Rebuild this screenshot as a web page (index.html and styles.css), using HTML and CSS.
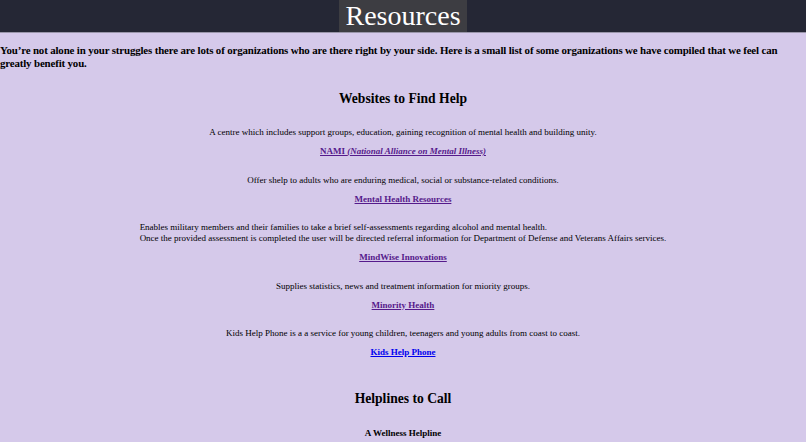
FILE: index.html
```html
<!DOCTYPE html>
<html lang="en">
<head>
<meta charset="utf-8">
<title>Resources</title>
<link rel="stylesheet" href="styles.css">
</head>
<body>
<header class="topbar">
  <h1 class="title">Resources</h1>
</header>
<p class="intro">You’re not alone in your struggles there are lots of organizations who are there right by your side. Here is a small list of some organizations we have compiled that we feel can greatly benefit you.</p>

<section class="section">
  <h2 class="section-title">Websites to Find Help</h2>
  <div class="items">
    <div class="item">
      <p class="desc">A centre which includes support groups, education, gaining recognition of mental health and building unity.</p>
      <a class="link visited" href="#">NAMI <em>(National Alliance on Mental Illness)</em></a>
    </div>
    <div class="item">
      <p class="desc">Offer shelp to adults who are enduring medical, social or substance-related conditions.</p>
      <a class="link visited" href="#">Mental Health Resources</a>
    </div>
    <div class="item">
      <p class="desc desc-block">Enables military members and their families to take a brief self-assessments regarding alcohol and mental health.<br>Once the provided assessment is completed the user will be directed referral information for Department of Defense and Veterans Affairs services.</p>
      <a class="link visited" href="#">MindWise Innovations</a>
    </div>
    <div class="item">
      <p class="desc">Supplies statistics, news and treatment information for miority groups.</p>
      <a class="link visited" href="#">Minority Health</a>
    </div>
    <div class="item">
      <p class="desc">Kids Help Phone is a a service for young children, teenagers and young adults from coast to coast.</p>
      <a class="link fresh" href="#">Kids Help Phone</a>
    </div>
  </div>
</section>

<section class="section helplines">
  <h2 class="section-title">Helplines to Call</h2>
  <h3 class="helpline-name">A Wellness Helpline</h3>
</section>
</body>
</html>
```
FILE: styles.css
```css
html, body {
  margin: 0;
  padding: 0;
}
body {
  background: #d5c9ea;
  font-family: "Liberation Serif", "Times New Roman", serif;
  color: #000;
  overflow: hidden;
}
.topbar {
  background: #252735;
  height: 32px;
  border-bottom: 1px solid #9a96aa;
  display: flex;
  justify-content: center;
}
.title {
  margin: 0;
  background: #3d3d42;
  color: #fff;
  font-weight: normal;
  font-size: 28px;
  line-height: 32px;
  padding: 0 6px;
}
.intro {
  margin: 11px 0 0;
  font-weight: bold;
  font-size: 10.9px;
  letter-spacing: -0.15px;
  line-height: 12.5px;
}
.section {
  display: flex;
  flex-direction: column;
  align-items: center;
}
.section-title {
  margin: 21px 0 0;
  font-size: 13.6px;
  line-height: 18px;
}
.items {
  margin-top: 19px;
  display: flex;
  flex-direction: column;
  align-items: center;
  gap: 17.6px;
}
.item {
  display: flex;
  flex-direction: column;
  align-items: center;
  gap: 8px;
}
.desc {
  margin: 0;
  font-size: 9px;
  line-height: 11px;
  text-align: center;
}
.desc-block {
  text-align: left;
}
.link {
  font-size: 9px;
  line-height: 11px;
  font-weight: bold;
  text-decoration: underline;
}
.link.visited { color: #551a8b; }
.link.fresh { color: #0000ee; }
.helplines .section-title {
  margin-top: 32px;
}
.helpline-name {
  margin: 20px 0 0;
  font-size: 9px;
  line-height: 11px;
}
```
